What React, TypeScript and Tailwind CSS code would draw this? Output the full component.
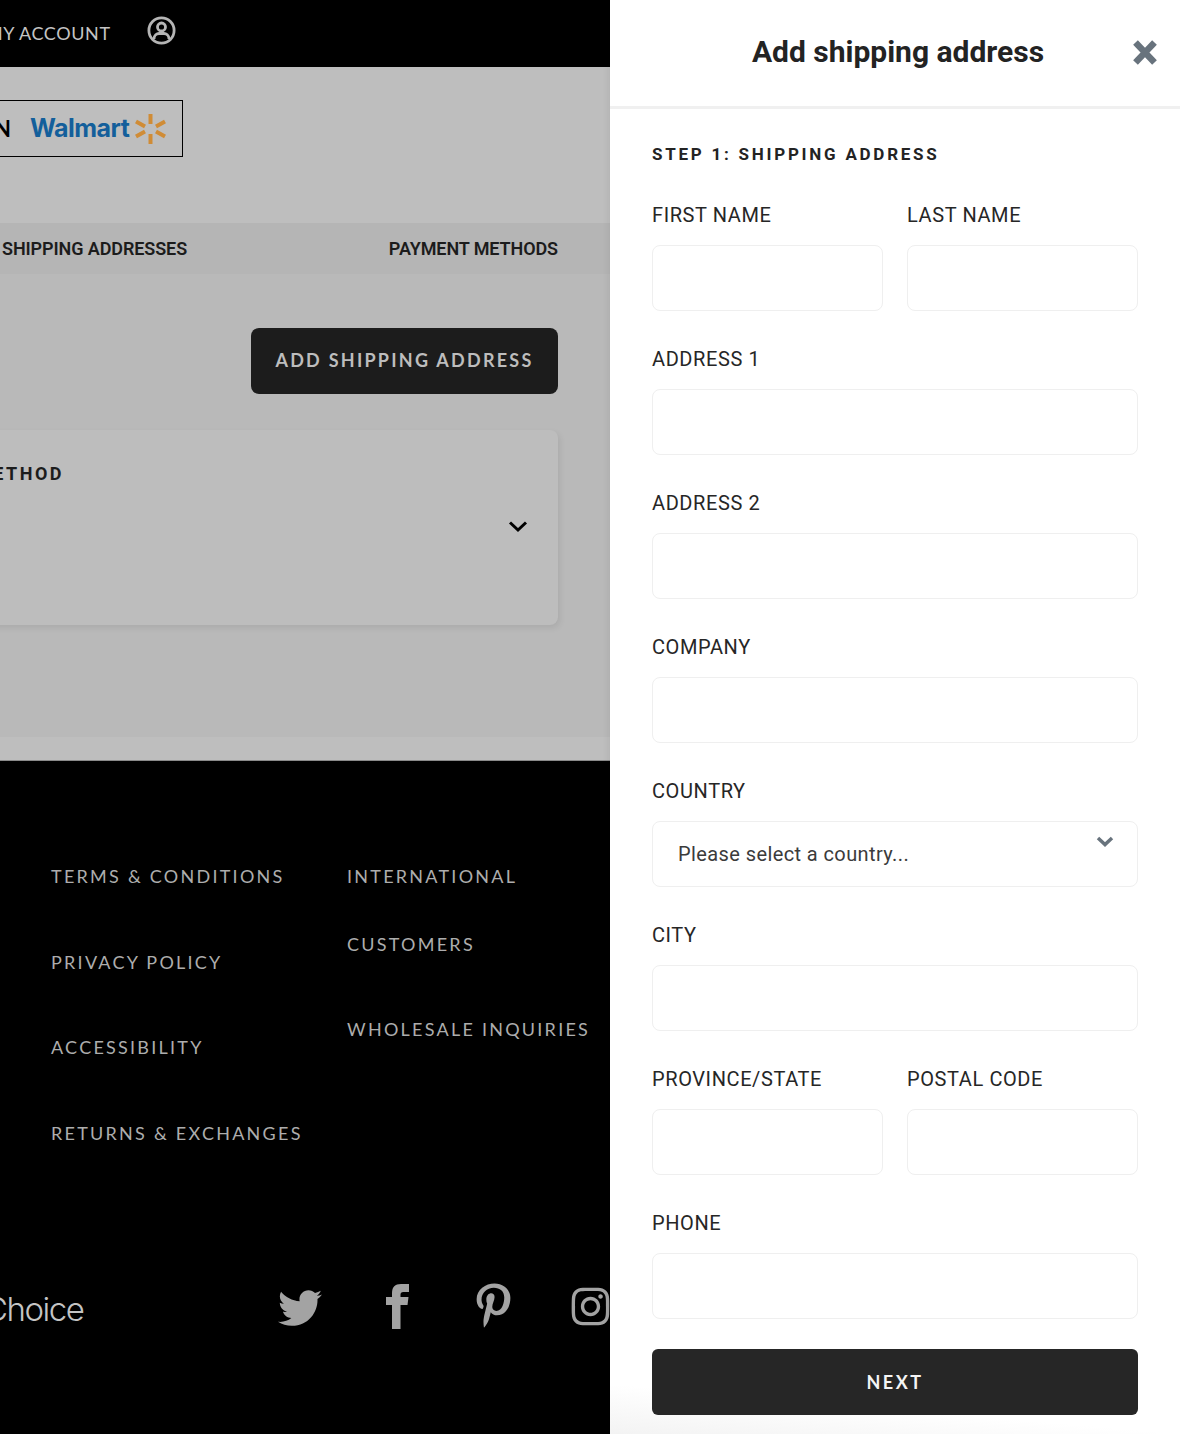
import React from "react";
import { FaTwitter, FaPinterestP, FaInstagram } from "react-icons/fa";

function Label({ children }: { children: React.ReactNode }) {
  return <div className="h-[24px] text-[20px] leading-[24px] tracking-[0.6px] text-[#262626] font-normal">{children}</div>;
}

function Field({ label, select }: { label: string; select?: boolean }) {
  return (
    <div className="flex flex-col">
      <Label>{label}</Label>
      <div className="relative mt-[18px] h-[66px] rounded-[8px] border border-[#efefef] bg-white pl-[25px] flex items-center">
        {select && (
          <>
            <span className="text-[20px] tracking-[0.4px] text-[#3b3b3b]">Please select a country...</span>
            <svg className="absolute right-[23px] top-[14px]" width="18" height="12" viewBox="0 0 18 12">
              <path d="M2 2l7 6.500L16 2" fill="none" stroke="#68737d" strokeWidth="3.500" />
            </svg>
          </>
        )}
      </div>
    </div>
  );
}

const col1 = ["TERMS & CONDITIONS", "PRIVACY POLICY", "ACCESSIBILITY", "RETURNS & EXCHANGES"];

export default function App() {
  return (
    <div className="flex h-[1434px] w-[1180px] overflow-hidden bg-white font-['Roboto',sans-serif]">
      {/* Dimmed page */}
      <div className="relative flex h-full w-[610px] shrink-0 flex-col overflow-hidden bg-black">
        <header className="flex h-[67px] items-center bg-black font-['Lato',sans-serif] text-[#c4c4c4]">
          <span className="-ml-[14px] whitespace-nowrap text-[18px] tracking-[0.6px]">MY ACCOUNT</span>
          <svg className="ml-[36px] -mt-[7px]" width="29" height="29" viewBox="0 0 29 29" fill="none" stroke="#b5b5b5" strokeWidth="2.800">
            <circle cx="14.500" cy="14.500" r="12.600" />
            <circle cx="14.500" cy="11" r="4" />
            <path d="M7 23c0-4 3-5.500 5-5.500h5c2 0 5 1.500 5 5.500" />
          </svg>
        </header>

        <section className="h-[156px] bg-[#bebebe] pt-[33px]">
          <div className="flex h-[57px] w-[183px] items-center border border-l-0 border-black">
            <span className="-ml-[6px] font-['Lato',sans-serif] text-[22px] font-bold text-black">N</span>
            <span className="ml-[19px] font-['Inter',sans-serif] text-[25px] font-bold tracking-[-0.5px] text-[#135f9b]">Walmart</span>
            <svg className="ml-[6px]" width="31" height="30" viewBox="0 0 31 30" fill="none" stroke="#d08c36" strokeWidth="4">
              <path d="M15.500 0v10M15.500 20v10M1 7.500l9 5M21 17.500l9 5M1 22.500l9-5M21 12.500l9-5" />
            </svg>
          </div>
        </section>

        <nav className="flex h-[51px] items-center justify-between bg-[#b5b5b5] pl-[2px] pr-[52px] pb-[1px] text-[18px] font-semibold tracking-[-0.1px] text-[#1c1c1c]">
          <span>SHIPPING ADDRESSES</span>
          <span>PAYMENT METHODS</span>
        </nav>

        <main className="flex h-[463px] flex-col items-end bg-[#b9b9b9] pr-[52px] pt-[54px]">
          <div className="flex h-[66px] w-[307px] items-center justify-center rounded-[8px] bg-[#1c1c1c] pb-[2px] font-['Lato',sans-serif] text-[18px] font-bold tracking-[2.250px] text-[#bdbdbd]">
            ADD SHIPPING ADDRESS
          </div>
          <div className="relative mt-[36px] h-[195px] w-[600px] rounded-[8px] bg-[#bdbdbd] pt-[34px] shadow-[2px_3px_6px_rgba(0,0,0,0.08)]">
            <div className="ml-[17px] text-[18px] font-bold leading-[20px] tracking-[2.500px] text-[#1c1c1c]">METHOD</div>
            <svg className="absolute right-[30px] top-[90px]" width="20" height="13" viewBox="0 0 20 13">
              <path d="M2 2.500l8 7.500 8-7.500" fill="none" stroke="#000" strokeWidth="3" />
            </svg>
          </div>
        </main>

        <div className="h-[24px] border-b border-[#8a8a8a] bg-[#bebebe]" />

        <footer className="flex-1 bg-black">
          <div className="flex pt-[103px] font-['Lato',sans-serif] text-[18px] leading-[24px] tracking-[2.250px] text-[#adadad]">
            <div className="ml-[51px] flex w-[296px] flex-col gap-[61.500px]">
              {col1.map((t) => (
                <span key={t}>{t}</span>
              ))}
            </div>
            <div className="flex flex-col whitespace-nowrap">
              <span>INTERNATIONAL</span>
              <span className="mt-[44px]">CUSTOMERS</span>
              <span className="mt-[61px]">WHOLESALE INQUIRIES</span>
            </div>
          </div>
          <div className="mt-[136px] flex items-start text-[#a3a3a3]">
            <span className="-ml-[16px] mt-[8px] w-[294px] shrink-0 font-['Inter',sans-serif] text-[33px] font-light tracking-[-1.500px] leading-[40px] text-[#c4c4c4]">
              Choice
            </span>
            <FaTwitter className="mt-[5px] shrink-0" size={44} />
            <svg className="ml-[64px] mt-[3px] shrink-0" width="23" height="45" viewBox="0 0 23 45" fill="currentColor">
              <path d="M6 45V21H0v-8h6V9c0-6 3-9 9-9h8v8h-5c-3 0-3.500 1-3.500 3.500V13h8l-1 8h-7v24z" />
            </svg>
            <FaPinterestP className="ml-[62px] mt-[2px] shrink-0" size={45} />
            <FaInstagram className="ml-[53px] mt-[4px] shrink-0" size={43} />
          </div>
        </footer>
      </div>

      {/* Drawer */}
      <aside className="relative z-10 flex h-full w-[570px] shrink-0 flex-col bg-white shadow-[-3px_0_6px_rgba(0,0,0,0.05)]">
        <div className="relative flex h-[109px] items-center justify-center border-b-[3px] border-[#f0f0f0] pb-[3px] pl-[6px]">
          <h2 className="text-[30px] font-bold leading-none text-[#232323]">Add shipping address</h2>
          <svg className="absolute right-[22px] top-[39px]" width="26" height="27" viewBox="0 0 26 27">
            <path d="M3.500 3.500l19 20M22.500 3.500l-19 20" fill="none" stroke="#68737d" strokeWidth="6.500" />
          </svg>
        </div>
        <div className="flex flex-1 flex-col bg-white px-[42px] pt-[35px]">
          <h3 className="text-[17px] font-bold leading-[20px] tracking-[2.750px] text-[#232323]">STEP 1: SHIPPING ADDRESS</h3>
          <div className="mt-[39px] flex flex-col gap-[36px]">
            <div className="grid grid-cols-2 gap-[24px]">
              <Field label="FIRST NAME" />
              <Field label="LAST NAME" />
            </div>
            <Field label="ADDRESS 1" />
            <Field label="ADDRESS 2" />
            <Field label="COMPANY" />
            <Field label="COUNTRY" select />
            <Field label="CITY" />
            <div className="grid grid-cols-2 gap-[24px]">
              <Field label="PROVINCE/STATE" />
              <Field label="POSTAL CODE" />
            </div>
            <Field label="PHONE" />
          </div>
          <div className="relative z-10 mt-[30px] flex h-[66px] items-center justify-center rounded-[6px] bg-[#262626] font-['Lato',sans-serif] text-[18px] font-bold tracking-[2.500px] text-[#f5f5f5]">
            NEXT
          </div>
        </div>
        <div className="pointer-events-none absolute bottom-0 left-0 h-[50px] w-full bg-gradient-to-tr from-[#f3f3f3] via-white to-white" />
      </aside>
    </div>
  );
}
